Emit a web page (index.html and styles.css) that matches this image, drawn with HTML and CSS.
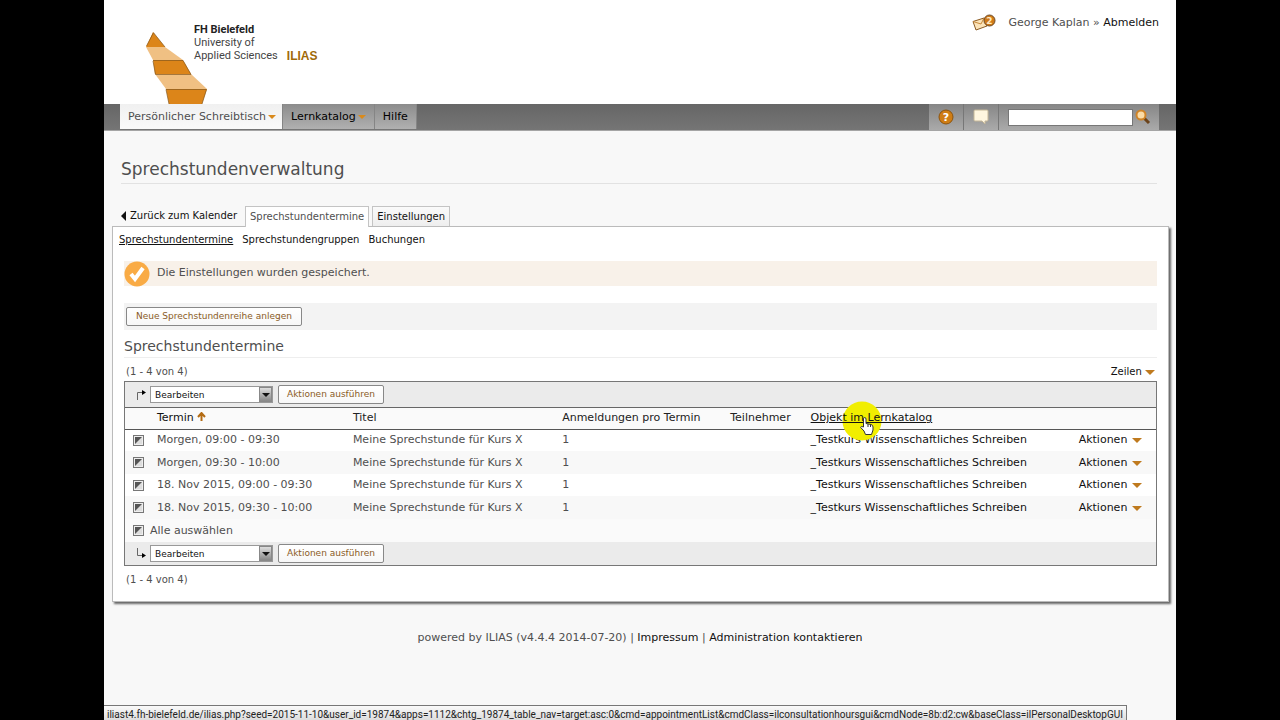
FILE: index.html
```html
<!DOCTYPE html>
<html lang="de">
<head>
<meta charset="utf-8">
<title>Sprechstundenverwaltung</title>
<link rel="stylesheet" href="styles.css">
</head>
<body>
<div class="page">
  <header class="header">
    <svg class="tower" width="64" height="72" viewBox="0 0 64 72" aria-hidden="true">
      <path fill="#dc8519" d="M8 0 20 15H1z"/>
      <path fill="#f0c083" d="M1 15h19l18 13H8z"/>
      <path fill="#dc8519" d="M8 28h30l8 14H10z"/>
      <path fill="#f0c083" d="M10 42h36l16 15H21z"/>
      <path fill="#dc8519" d="M21 57h41l-5 15H24z"/>
      <path fill="none" stroke="#85581f" stroke-opacity=".7" d="M20 15 8.500.7 1.500 14M8 28.500h30l8 14H10.500L8 29M24 72l-3-14.500h40.500L57 72"/>
    </svg>
    <div class="brand"><strong>FH Bielefeld</strong><br>University of<br>Applied Sciences</div>
    <div class="product">ILIAS</div>
    <div class="user">
      <svg width="24" height="20" viewBox="0 0 24 20" aria-hidden="true">
        <path fill="#fbe3b8" stroke="#8a5a22" d="M1 8.500 12 5l3 8-11 4z"/>
        <path fill="none" stroke="#c88a3c" d="m1 8.500 8 2.500 3-6"/>
        <circle cx="17.500" cy="7.500" r="5.500" fill="#cf7a18" stroke="#6b4a28"/>
        <text x="17.500" y="11" text-anchor="middle" class="glyph">2</text>
      </svg>
      <span>George Kaplan » <a href="#">Abmelden</a></span>
    </div>
  </header>
  <nav class="mainbar">
    <a class="menu active" href="#">Persönlicher Schreibtisch <i class="caret"></i></a>
    <a class="menu" href="#">Lernkatalog <i class="caret"></i></a>
    <a class="menu" href="#">Hilfe</a>
    <button class="tool first" aria-label="Hilfe">
      <svg width="18" height="18" viewBox="0 0 18 18"><circle cx="9" cy="9" r="7" fill="#cf7d14" stroke="#8d540e"/><text x="9" y="13" text-anchor="middle" class="glyph big">?</text></svg>
    </button>
    <button class="tool" aria-label="Notizen">
      <svg width="18" height="18" viewBox="0 0 18 18"><path fill="#fff6df" stroke="#c5b798" d="M3 2h12q1 0 1 1v9q0 1-1 1h-2v3l-3-3H3q-1 0-1-1V3q0-1 1-1z"/></svg>
    </button>
    <form class="search">
      <input type="text" aria-label="Suche">
      <button type="button" aria-label="Suchen">
        <svg width="18" height="18" viewBox="0 0 18 18"><path d="m10 10 5 5" stroke="#6b431a" stroke-width="3"/><circle cx="7" cy="7" r="4.500" fill="#fbdca6" stroke="#d08427" stroke-width="2"/></svg>
      </button>
    </form>
  </nav>

  <main class="main">
    <h1>Sprechstundenverwaltung</h1>
    <div class="tabs">
      <a class="back" href="#"><i class="left"></i>Zurück zum Kalender</a>
      <a class="tab current" href="#">Sprechstundentermine</a>
      <a class="tab" href="#">Einstellungen</a>
    </div>
    <section class="panel">
      <div class="subtabs">
        <a class="here" href="#">Sprechstundentermine</a>
        <a href="#">Sprechstundengruppen</a>
        <a href="#">Buchungen</a>
      </div>
      <div class="content">
        <div class="message">
          <svg width="26" height="26" viewBox="0 0 26 26" aria-hidden="true"><circle cx="13" cy="13" r="12.500" fill="#f9ab45"/><path d="m7 13 4 5 8-11" fill="none" stroke="#fff" stroke-width="4"/></svg>
          <span>Die Einstellungen wurden gespeichert.</span>
        </div>
        <div class="toolbar"><button class="btn">Neue Sprechstundenreihe anlegen</button></div>
        <h2>Sprechstundentermine</h2>
        <div class="count"><span>(1 - 4 von 4)</span><a href="#">Zeilen <i class="caret"></i></a></div>
        <div class="box">
          <div class="bar">
            <svg width="11" height="11" viewBox="0 0 11 11" aria-hidden="true"><path d="M1.500 11V3.500H8" fill="none" stroke="#666"/><path d="m6 1 4 2.500L6 6z"/></svg>
            <span class="pick"><select aria-label="Aktion oben"><option>Bearbeiten</option></select><i class="drop"></i></span>
            <button class="btn">Aktionen ausführen</button>
          </div>
          <table>
            <colgroup><col class="c-check"><col class="c-date"><col class="c-title"><col class="c-limit"><col class="c-people"><col class="c-object"><col></colgroup>
            <thead><tr>
              <th></th>
              <th><a href="#">Termin</a> <svg width="9" height="9" viewBox="0 0 9 9" aria-hidden="true"><path d="M4.500 9V1M1 5l3.500-4L8 5" fill="none" stroke="#b36b13" stroke-width="2"/></svg></th>
              <th>Titel</th><th>Anmeldungen pro Termin</th><th>Teilnehmer</th>
              <th><span class="hover"><a href="#">Objekt im Lernkatalog</a>
                <svg class="pointer" width="40" height="40" viewBox="0 0 40 40" aria-hidden="true"><circle cx="20" cy="20" r="19.500" fill="#f1ee00"/></svg>
                <svg class="hand" width="14" height="18" viewBox="0 0 14 18" aria-hidden="true"><path fill="#fff" stroke="#333" d="M3.500 10V2q0-1.500 1.200-1.500T6 2v4.500l5 1q2 .5 2 2.500v3l-1.500 4.500h-6L4 14 .7 10.500q0-2 2.800-.5M8 7v3M10.500 7.500V10"/></svg>
              </span></th>
              <th></th>
            </tr></thead>
            <tbody>
              <tr><td><input type="checkbox" aria-label="Termin 1"></td><td>Morgen, 09:00 - 09:30</td><td>Meine Sprechstunde für Kurs X</td><td>1</td><td></td><td><a href="#">_Testkurs Wissenschaftliches Schreiben</a></td><td><a href="#">Aktionen <i class="caret"></i></a></td></tr>
              <tr><td><input type="checkbox" aria-label="Termin 2"></td><td>Morgen, 09:30 - 10:00</td><td>Meine Sprechstunde für Kurs X</td><td>1</td><td></td><td><a href="#">_Testkurs Wissenschaftliches Schreiben</a></td><td><a href="#">Aktionen <i class="caret"></i></a></td></tr>
              <tr><td><input type="checkbox" aria-label="Termin 3"></td><td>18. Nov 2015, 09:00 - 09:30</td><td>Meine Sprechstunde für Kurs X</td><td>1</td><td></td><td><a href="#">_Testkurs Wissenschaftliches Schreiben</a></td><td><a href="#">Aktionen <i class="caret"></i></a></td></tr>
              <tr><td><input type="checkbox" aria-label="Termin 4"></td><td>18. Nov 2015, 09:30 - 10:00</td><td>Meine Sprechstunde für Kurs X</td><td>1</td><td></td><td><a href="#">_Testkurs Wissenschaftliches Schreiben</a></td><td><a href="#">Aktionen <i class="caret"></i></a></td></tr>
            </tbody>
          </table>
          <label class="all"><input type="checkbox"> Alle auswählen</label>
          <div class="bar bottom">
            <svg width="11" height="11" viewBox="0 0 11 11" aria-hidden="true"><path d="M1.500 0V7.500H8" fill="none" stroke="#666"/><path d="m6 5 4 2.500L6 10z"/></svg>
            <span class="pick"><select aria-label="Aktion unten"><option>Bearbeiten</option></select><i class="drop"></i></span>
            <button class="btn">Aktionen ausführen</button>
          </div>
        </div>
        <div class="count end"><span>(1 - 4 von 4)</span></div>
      </div>
    </section>
  </main>
  <footer class="footer">powered by ILIAS (v4.4.4 2014-07-20) | <a href="#">Impressum</a> | <a href="#">Administration kontaktieren</a></footer>
  <div class="status">iliast4.fh-bielefeld.de/ilias.php?seed=2015-11-10&amp;user_id=19874&amp;apps=1112&amp;chtg_19874_table_nav=target:asc:0&amp;cmd=appointmentList&amp;cmdClass=ilconsultationhoursgui&amp;cmdNode=8b:d2:cw&amp;baseClass=ilPersonalDesktopGUI</div>
</div>
</body>
</html>
```
FILE: styles.css
```css
* { box-sizing: border-box; }
body {
  margin: 0;
  background: #000;
  color: #4f4f4f;
  font: 11px/16px Verdana, "DejaVu Sans", sans-serif;
}
a { color: #111; text-decoration: none; }
svg { display: block; flex: none; }
button, input, select { font: inherit; }
.page {
  display: flex;
  flex-direction: column;
  min-height: 100vh;
  margin: 0 104px;
  background: #f8f8f8;
}
.header {
  display: flex;
  height: 104px;
  padding: 0 17px 0 41px;
  background: #fff;
}
.tower { align-self: flex-end; }
.brand {
  margin: 23px 0 0 -15px;
  color: #444;
  font: 11px/13px Roboto, sans-serif;
}
.brand strong { color: #222; }
.product {
  margin: 49px 0 0 9px;
  color: #a06a08;
  font: bold 12px/14px "Liberation Sans", sans-serif;
}
.user {
  display: flex;
  gap: 12px;
  margin: 13px 0 0 auto;
  line-height: 20px;
}
.glyph { fill: #ffe9c4; font: bold 9px "DejaVu Sans", sans-serif; }
.glyph.big { fill: #fff; font-size: 11px; }

.mainbar {
  display: flex;
  height: 27px;
  padding: 0 17px 0 16px;
  border-bottom: 1px solid #a5a5a5;
  background: linear-gradient(#666, #757575);
}
.menu {
  display: flex;
  align-items: center;
  gap: 2px;
  padding: 0 8px;
  height: 25px;
  border-right: 1px solid #858585;
  background: linear-gradient(#8c8c8c, #b0b0b0);
  color: #000;
}
.menu.active { padding-right: 6px; background: linear-gradient(#f0f0f0, #fafafa); color: #4f4f4f; }
.caret {
  display: inline-block;
  border: 5px solid transparent;
  border-top-color: #bf7a1e;
  border-bottom: 0;
}
.menu .caret { border-width: 4px 4px 0; border-top-color: #d98a1c; }
.tool {
  display: flex;
  align-items: center;
  justify-content: center;
  width: 35px;
  height: 26px;
  padding: 0;
  border: 0;
  border-right: 1px solid #777;
  background: linear-gradient(#868686, #aaa);
}
.tool.first { margin-left: auto; }
.search {
  display: flex;
  align-items: center;
  height: 26px;
  padding-left: 9px;
  background: linear-gradient(#868686, #aaa);
}
.search input {
  width: 125px;
  height: 17px;
  padding: 0 3px;
  border: 1px solid #777;
  background: #fff;
}
.search button { padding: 0 7px 0 1px; border: 0; background: none; }

.main { padding: 0 7px 0 8px; }
h1 {
  margin: 27px 12px 0 9px;
  padding-bottom: 2px;
  border-bottom: 1px solid #e2e2e2;
  font: 17px/23px Verdana, "DejaVu Sans", sans-serif;
}
.tabs {
  display: flex;
  align-items: flex-end;
  gap: 3px;
  margin-top: 21px;
  padding-left: 9px;
  font-size: 10px;
}
.back { display: flex; align-items: center; height: 21px; margin-right: 5px; }
.left {
  margin-right: 4px;
  border: 5px solid transparent;
  border-right-color: #111;
  border-left: 0;
}
.tab {
  height: 20px;
  padding: 2px 4px;
  border: 1px solid #c4c4c4;
  border-bottom: 0;
  background: linear-gradient(#fafafa, #eee);
}
.tab.current {
  position: relative;
  height: 21px;
  margin-bottom: -1px;
  background: #fff;
  color: #4f4f4f;
}
.panel {
  padding: 5px 11px 12px;
  border: 1px solid #bbb;
  background: #fff;
  box-shadow: 2px 2px 2px #666;
}
.subtabs { display: flex; gap: 9px; margin-left: -5px; font-size: 10px; }
.here { text-decoration: underline; }
.message {
  display: flex;
  gap: 7px;
  height: 25px;
  margin-top: 13px;
  background: #f8f1e9;
  line-height: 23px;
}
.toolbar { margin-top: 17px; padding: 4px 2px; background: #f3f3f3; }
.btn {
  height: 19px;
  padding: 0 8px;
  border: 1px solid #888;
  border-radius: 2px;
  background: linear-gradient(#fff, #f7f7f7);
  color: #8a5b1f;
  font-size: 9px;
  line-height: 15px;
}
.toolbar .btn { display: block; padding: 0 9px; }
h2 {
  margin: 7px 0 0;
  padding-bottom: 1px;
  border-bottom: 1px solid #eee;
  font: 14px/19px Verdana, "DejaVu Sans", sans-serif;
}
.count {
  display: flex;
  justify-content: space-between;
  padding: 6px 2px 1px;
  font-size: 10px;
}
.box { border: 1px solid #777; background: #fafafa; }
.bar {
  display: flex;
  align-items: center;
  height: 26px;
  padding-left: 11px;
  border-bottom: 1px solid #666;
  background: #ebebeb;
}
.bar.bottom { height: 23px; border: 0; }
.pick { position: relative; margin: 0 5px 0 3px; }
.pick select {
  display: block;
  width: 123px;
  height: 17px;
  padding: 0 4px;
  appearance: none;
  border: 1px solid #999;
  border-radius: 0;
  background: #fff;
  color: #111;
  font-size: 9px;
}
.drop {
  position: absolute;
  top: 1px;
  right: 1px;
  display: flex;
  align-items: center;
  justify-content: center;
  width: 13px;
  height: 15px;
  border: 1px solid #888;
  background: linear-gradient(#ddd, #888);
  pointer-events: none;
}
.drop::after {
  border: 4px solid transparent;
  border-top-color: #111;
  border-bottom: 0;
  content: "";
}
table { width: 100%; border-collapse: collapse; table-layout: fixed; }
.c-check { width: 26px; }
.c-date { width: 19%; }
.c-title { width: 20.3%; }
.c-limit { width: 16.3%; }
.c-people { width: 7.8%; }
.c-object { width: 26%; }
th {
  height: 21px;
  padding: 0 0 0 6px;
  border-bottom: 1px solid #555;
  color: #222;
  font-weight: normal;
  text-align: left;
  white-space: nowrap;
}
th svg { display: inline-block; }
td { height: 22px; padding: 0 0 0 6px; white-space: nowrap; }
td:first-child { padding-left: 8px; }
td .caret { margin-left: 1px; }
tbody tr { background: #fff; }
tbody tr:nth-child(even) { background: #f8f8f8; }
tbody tr:nth-child(even) td { height: 23px; }
.hover { position: relative; z-index: 0; }
.hover a { text-decoration: underline; }
.pointer { position: absolute; left: 31px; top: -10px; z-index: -1; }
.hand { position: absolute; left: 49px; top: 6px; }
input[type="checkbox"] {
  display: block;
  width: 11px;
  height: 11px;
  margin: 0;
  padding: 1px;
  appearance: none;
  border: 1px solid #777;
  background: linear-gradient(135deg, #555 45%, #ddd 55%) content-box, #eee;
}
.all { display: flex; align-items: center; gap: 6px; height: 23px; padding-left: 8px; }
.footer { margin-top: 28px; text-align: center; }
.status {
  align-self: flex-start;
  height: 15px;
  margin-top: auto;
  padding: 1px 3px 0;
  border: 1px solid #777;
  border-width: 1px 1px 0 0;
  background: linear-gradient(#fafafa, #ddd);
  color: #222;
  font: 10px/15px Roboto, sans-serif;
  white-space: nowrap;
}
```
